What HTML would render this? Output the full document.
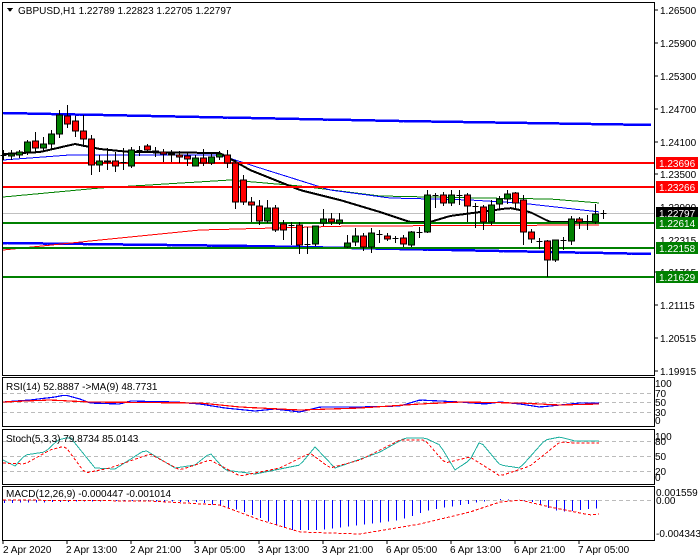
<!DOCTYPE html>
<html><head><meta charset="utf-8"><style>
html,body{margin:0;padding:0;background:#fff;width:700px;height:560px;overflow:hidden}
svg text{font-family:"Liberation Sans",sans-serif;font-size:10px;fill:#000}
</style></head><body>
<svg id="s" width="700" height="560" xmlns="http://www.w3.org/2000/svg" shape-rendering="crispEdges">
<rect width="700" height="560" fill="#fff"/>
<rect x="2.5" y="2.5" width="652" height="373" fill="none" stroke="#000"/>
<rect x="2.5" y="377.5" width="652" height="49" fill="none" stroke="#000"/>
<rect x="2.5" y="429.5" width="652" height="55" fill="none" stroke="#000"/>
<rect x="2.5" y="486.5" width="652" height="54" fill="none" stroke="#000"/>
<g id="main"></g>
<g id="ind"></g>
<g stroke="#000">
<line x1="655" y1="10" x2="658" y2="10"/><line x1="655" y1="43" x2="658" y2="43"/><line x1="655" y1="76" x2="658" y2="76"/><line x1="655" y1="109" x2="658" y2="109"/><line x1="655" y1="142" x2="658" y2="142"/><line x1="655" y1="174" x2="658" y2="174"/><line x1="655" y1="272" x2="658" y2="272"/><line x1="655" y1="305" x2="658" y2="305"/><line x1="655" y1="338" x2="658" y2="338"/><line x1="655" y1="371" x2="658" y2="371"/>
</g>
<text x="660" y="14">1.26500</text><text x="660" y="47">1.25900</text><text x="660" y="80">1.25300</text><text x="660" y="113">1.24700</text><text x="660" y="146">1.24100</text><text x="660" y="178">1.23500</text>
<text x="660" y="211">1.22900</text><text x="660" y="244">1.22315</text><text x="660" y="276">1.21715</text>
<text x="660" y="309">1.21115</text><text x="660" y="342">1.20515</text><text x="660" y="375">1.19915</text>
<rect x="656" y="157" width="42" height="12" fill="#f00"/><text x="659" y="167" style="fill:#fff">1.23696</text>
<rect x="656" y="181" width="42" height="12" fill="#f00"/><text x="659" y="191" style="fill:#fff">1.23266</text>
<rect x="656" y="207" width="42" height="12" fill="#000"/><text x="659" y="217" style="fill:#fff">1.22797</text>
<rect x="656" y="217" width="42" height="12" fill="#008000"/><text x="659" y="227" style="fill:#fff">1.22614</text>
<rect x="656" y="242" width="42" height="12" fill="#008000"/><text x="659" y="252" style="fill:#fff">1.22158</text>
<rect x="656" y="271" width="42" height="12" fill="#008000"/><text x="659" y="281" style="fill:#fff">1.21629</text>
<text x="655" y="387">100</text><text x="655" y="397">70</text><text x="655" y="406">50</text><text x="655" y="416">30</text><text x="655" y="424">0</text>
<text x="655" y="440">100</text><text x="655" y="445">80</text><text x="655" y="460">50</text><text x="655" y="475">20</text><text x="655" y="481">0</text>
<text x="656" y="496">0.001559</text><text x="656" y="504">0.00</text><text x="656" y="537">-0.004343</text>
<g stroke="#000"><line x1="3" y1="541" x2="3" y2="544"/><line x1="67" y1="541" x2="67" y2="544"/><line x1="131" y1="541" x2="131" y2="544"/><line x1="195" y1="541" x2="195" y2="544"/><line x1="259" y1="541" x2="259" y2="544"/><line x1="323" y1="541" x2="323" y2="544"/><line x1="387" y1="541" x2="387" y2="544"/><line x1="451" y1="541" x2="451" y2="544"/><line x1="515" y1="541" x2="515" y2="544"/><line x1="579" y1="541" x2="579" y2="544"/></g>
<text x="3" y="553">2 Apr 2020</text><text x="66" y="553">2 Apr 13:00</text><text x="130" y="553">2 Apr 21:00</text><text x="194" y="553">3 Apr 05:00</text><text x="258" y="553">3 Apr 13:00</text><text x="322" y="553">3 Apr 21:00</text><text x="386" y="553">6 Apr 05:00</text><text x="450" y="553">6 Apr 13:00</text><text x="514" y="553">6 Apr 21:00</text><text x="578" y="553">7 Apr 05:00</text>
<polygon points="7,8 13,8 10,12" fill="#000"/>
<text x="18" y="14">GBPUSD,H1  1.22789 1.22823 1.22705 1.22797</text>
<text x="6" y="390">RSI(14) 52.8887  -&gt;MA(9) 48.7731</text>
<text x="6" y="442">Stoch(5,3,3) 79.8734 85.0143</text>
<text x="6" y="497">MACD(12,26,9) -0.000447 -0.001014</text>
</svg>
<script>
var NS="http://www.w3.org/2000/svg";
function el(p,t,a){var e=document.createElementNS(NS,t);for(var k in a)e.setAttribute(k,a[k]);p.appendChild(e);return e;}
var M=document.getElementById('main'),I=document.getElementById('ind');
function interp(pts,x){for(var i=0;i<pts.length-1;i++){if(x<=pts[i+1][0]){var a=pts[i],b=pts[i+1];return a[1]+(b[1]-a[1])*(x-a[0])/(b[0]-a[0]);}}return pts[pts.length-1][1];}
function line(g,pts,col,w,x0,x1,dash){var d="";for(var x=x0;x<=x1;x+=4){d+=(x==x0?"M":"L")+x+","+interp(pts,x).toFixed(1);}var a={d:d,fill:"none",stroke:col,"stroke-width":w};if(dash)a["stroke-dasharray"]=dash;el(g,"path",a);}
el(M,"line",{x1:3,x2:654,y1:213.5,y2:213.5,stroke:"#c0c0c0"});
line(M,[[3,113],[200,117],[400,121],[654,125]],"#0000ff",2.5,3,654);
line(M,[[3,243],[250,246],[450,250],[654,254]],"#0000ff",2.5,3,654);
line(M,[[3,250],[100,240],[200,230],[350,226],[600,225]],"#f00",1,3,602);
line(M,[[3,197],[100,188],[230,180],[300,186],[380,196],[480,198],[550,199],[600,203]],"#008000",1,3,602);
line(M,[[3,160],[70,155],[220,155],[260,168],[330,190],[390,198],[470,200],[520,203],[600,212]],"#0000ff",1,3,602);
line(M,[[3,154],[40,152],[75,144],[100,149],[130,152],[220,153],[250,170],[300,190],[340,200],[380,212],[410,222],[430,222],[450,216],[480,212],[510,208],[530,212],[550,222],[600,222]],"#000",2,3,602);
[[163,"#f00"],[187,"#f00"],[223,"#008000"],[248,"#008000"],[277,"#008000"]].forEach(function(h){el(M,"rect",{x:3,y:h[0]-1,width:651,height:2,fill:h[1]});});
var C=[[155,155,150,160],[156,154,150,160],[155,152,150,158],[152,142,140,155],[141,148,132,152],[148,144,137,152],[144,134,130,150],[134,115,110,138],[116,124,105,128],[121,131,116,137],[131,139,115,147],[139,165,135,175],[165,161,155,172],[162,161,148,170],[161,166,152,172],[162,162,148,170],[166,150,147,168],[150,150,146,156],[146,150,144,153],[151,152,147,157],[152,154,149,162],[154,155,150,162],[155,157,151,163],[156,159,152,166],[166,158,155,164],[158,163,149,166],[163,157,154,165],[157,154,151,160],[155,163,150,168],[163,202,160,209],[180,202,175,205],[202,205,197,222],[206,221,200,225],[221,208,200,223],[208,230,205,232],[224,230,220,240],[225,225,222,245],[225,245,222,254],[244,244,227,254],[244,226,226,246],[223,219,209,226],[219,222,213,225],[223,220,213,225],[247,243,235,248],[242,236,228,246],[236,247,233,251],[247,233,228,253],[234,234,230,243],[236,239,233,241],[238,238,236,243],[238,244,235,247],[245,232,231,247],[232,232,227,238],[232,195,190,233],[195,195,193,208],[195,203,192,206],[203,195,190,206],[195,195,190,205],[195,206,193,222],[206,206,203,228],[207,222,205,230],[222,205,200,225],[204,199,196,210],[199,194,190,204],[193,203,192,210],[200,232,195,245],[232,239,229,243],[241,241,238,249],[241,260,240,277],[260,240,240,262],[240,240,237,250],[241,219,216,245],[219,222,217,229],[221,221,215,230],[222,214,204,224],[213,213,210,219]];
C.forEach(function(c,i){var cx=3.5+8*i;var up=c[1]<c[0];
el(M,"line",{x1:cx,x2:cx,y1:c[2],y2:c[3],stroke:"#000"});
var t=Math.min(c[0],c[1]),b=Math.max(c[0],c[1]);
if(b-t<1){el(M,"line",{x1:cx-3,x2:cx+3,y1:t+.5,y2:t+.5,stroke:"#000"});}
else el(M,"rect",{x:cx-3,y:t,width:6,height:b-t,fill:up?"#008000":"#f00",stroke:"#000","stroke-width":1});});
[[393],[402],[412],[441],[456],[471],[500]].forEach(function(y){el(I,"line",{x1:3,x2:654,y1:y[0]+.5,y2:y[0]+.5,stroke:"#bbb","stroke-dasharray":"4,3"});});
line(I,[[3,402],[30,400],[55,397],[65,395],[80,399],[90,403],[120,404],[130,401],[175,402],[200,404],[225,408],[255,411],[275,409],[300,412],[320,407],[360,407],[400,406],[420,400],[460,402],[485,404],[500,402],[520,404],[540,407],[560,405],[580,403],[600,403]],"#0000ff",1.2,3,602);
line(I,[[3,402],[50,400],[90,402],[200,403],[240,407],[300,410],[360,408],[420,404],[460,402],[520,403],[560,405],[600,404]],"#f00",1.2,3,602);
line(I,[[3,460],[15,466],[25,455],[45,452],[58,440],[70,437],[95,468],[115,469],[145,450],[175,468],[195,465],[210,453],[225,470],[255,474],[280,469],[300,465],[315,447],[335,468],[355,461],[380,452],[405,438],[425,438],[440,445],[455,470],[470,460],[480,441],[500,465],[520,468],[545,440],[560,437],[575,441]],"#20b0a0",1,3,600);
line(I,[[3,463],[25,464],[50,450],[65,446],[85,473],[110,468],[150,454],[180,470],[210,460],[240,476],[280,468],[310,453],[330,468],[360,460],[400,440],[425,440],[445,463],[470,457],[500,476],[530,466],[560,442],[575,443]],"#f00",1,3,600,"3,2");
for(var i=0;i<75;i++){var x=4.5+8*i;var v=interp([[0,-3],[120,-1],[200,-2],[240,-10],[290,-30],[320,-30],[400,-20],[430,-10],[500,1],[530,-1],[560,-12],[600,-8]],x);el(I,"line",{x1:x,x2:x,y1:500,y2:500-v,stroke:"#0000ff"});}
line(I,[[3,500],[150,501],[220,505],[260,520],[300,532],[360,534],[420,524],[470,512],[500,502],[520,500],[550,507],[590,515],[600,514]],"#f00",1,3,600,"3,2");
</script>
</body></html>
